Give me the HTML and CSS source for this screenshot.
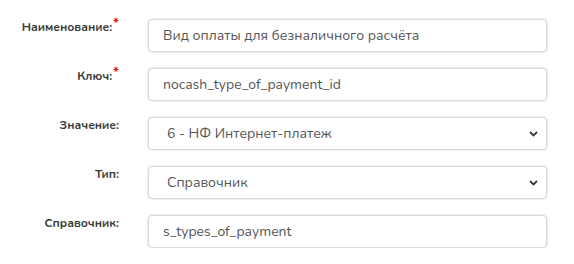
FILE: index.html
```html
<!DOCTYPE html>
<html lang="ru">
<head>
    <meta charset="UTF-8">
    <meta name="viewport" content="width=device-width, initial-scale=1.0">
    <title>Параметр</title>
    <link rel="stylesheet" href="styles.css">
</head>
<body>
    <form class="param-form">
        <div class="form-row">
            <label class="form-label">Наименование:<span class="required">*</span></label>
            <div class="form-field">
                <input class="form-control" type="text" value="Вид оплаты для безналичного расчёта">
            </div>
        </div>
        <div class="form-row">
            <label class="form-label">Ключ:<span class="required">*</span></label>
            <div class="form-field">
                <input class="form-control" type="text" value="nocash_type_of_payment_id">
            </div>
        </div>
        <div class="form-row">
            <label class="form-label">Значение:</label>
            <div class="form-field select-wrap">
                <select class="form-control form-select">
                    <option>6 - НФ Интернет-платеж</option>
                </select>
                <svg class="chevron" width="9" height="6" viewBox="0 0 9 6"><path d="M1 1l3.5 3.5L8 1" fill="none" stroke="#3a3a3a" stroke-width="1.8"/></svg>
            </div>
        </div>
        <div class="form-row">
            <label class="form-label">Тип:</label>
            <div class="form-field select-wrap">
                <select class="form-control form-select">
                    <option>Справочник</option>
                </select>
                <svg class="chevron" width="9" height="6" viewBox="0 0 9 6"><path d="M1 1l3.5 3.5L8 1" fill="none" stroke="#3a3a3a" stroke-width="1.8"/></svg>
            </div>
        </div>
        <div class="form-row">
            <label class="form-label">Справочник:</label>
            <div class="form-field">
                <input class="form-control" type="text" value="s_types_of_payment">
            </div>
        </div>
    </form>
</body>
</html>
```

FILE: styles.css
```css
body {
    margin: 0;
    padding: 0;
    background: #fff;
    font-family: "Nunito", "Open Sans", "Noto Sans", sans-serif;
}

.param-form {
    display: flex;
    flex-direction: column;
    gap: 16px;
    padding-top: 19px;
}

.form-row {
    display: grid;
    grid-template-columns: 119px 399px;
    column-gap: 29px;
    align-items: start;
}

.form-label {
    text-align: right;
    font-size: 12px;
    font-weight: 700;
    color: #3a3a3a;
    padding-top: 1px;
    line-height: 14px;
}

.required {
    color: #e8141b;
    font-size: 13px;
    vertical-align: top;
    position: relative;
    top: -3px;
    margin-left: 1px;
}

.form-field {
    position: relative;
}

.form-control {
    box-sizing: border-box;
    width: 100%;
    height: 33px;
    margin: 0;
    padding: 0 14px;
    border: 1px solid #d9d9d9;
    border-radius: 4px;
    box-shadow: 0 0 0 1px #efefef;
    background: #fff;
    font-family: inherit;
    font-size: 14px;
    color: #555;
    outline: none;
}

.form-select {
    appearance: none;
    -webkit-appearance: none;
    padding-left: 18px;
}

.chevron {
    position: absolute;
    right: 9px;
    top: 14px;
    pointer-events: none;
}
```
